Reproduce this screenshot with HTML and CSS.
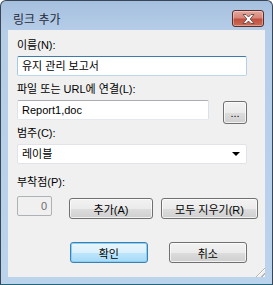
FILE: index.html
```html
<!DOCTYPE html>
<html lang="ko">
<head>
    <meta charset="UTF-8">
    <title>링크 추가</title>
    <link rel="stylesheet" href="styles.css">
</head>
<body>
    <div class="window">
        <div class="titlebar">
            <span class="title">링크 추가</span>
            <button class="close" title="닫기">
                <svg width="15" height="10" viewBox="0 0 15 10">
                    <path d="M2 0.5 L5 0.5 L7.5 3 L10 0.5 L13 0.5 L9.2 5 L13 9.5 L10 9.5 L7.5 7 L5 9.5 L2 9.5 L5.8 5 Z" fill="#fff" stroke="#5a3a3a" stroke-width="0.8" stroke-linejoin="round"/>
                </svg>
            </button>
        </div>

        <div class="client">
            <label class="label">이름(N):</label>
            <div class="field focused">유지 관리 보고서</div>

            <label class="label gap">파일 또는 URL에 연결(L):</label>
            <div class="row">
                <div class="field file">Report1,doc</div>
                <button class="btn browse">...</button>
            </div>

            <label class="label gap-sm">범주(C):</label>
            <div class="field combo">
                <span>레이블</span>
                <span class="arrow"></span>
            </div>

            <label class="label gap-lg">부착점(P):</label>
            <div class="row anchors">
                <div class="field number">0</div>
                <button class="btn add">추가(A)</button>
                <button class="btn clear">모두 지우기(R)</button>
            </div>

            <div class="row actions">
                <button class="btn ok">확인</button>
                <button class="btn cancel">취소</button>
            </div>

            <div class="grip"></div>
        </div>
    </div>
</body>
</html>
```

FILE: styles.css
```css
* {
    box-sizing: border-box;
}
body {
    margin: 0;
    background-color: #fff;
    font-family: "Liberation Sans", "Noto Sans CJK KR", sans-serif;
    font-size: 11px;
    color: #000;
}
.window {
    width: 273px;
    height: 285px;
    border: 1px solid #3a4656;
    border-bottom-color: #27627a;
    border-radius: 6px 6px 0 0;
    background: linear-gradient(to bottom, #a5c0de 0px, #b6cde8 30px, #bcd3ec 100%);
    display: flex;
    flex-direction: column;
}
.titlebar {
    height: 29px;
    display: flex;
    align-items: flex-start;
    justify-content: space-between;
    padding: 9px 8px 0 12px;
}
.title {
    font-family: "Noto Sans CJK KR", sans-serif;
    font-size: 12px;
    line-height: 17px;
    color: #1e2a38;
}
.close {
    width: 32px;
    height: 17px;
    margin-top: 0;
    padding: 0;
    border: 1px solid #5b2e2e;
    border-radius: 3px;
    background: linear-gradient(to bottom, #e3a99c 0%, #d7877a 45%, #c05040 55%, #cd6b55 100%);
    display: flex;
    align-items: center;
    justify-content: center;
    box-shadow: inset 0 0 0 1px rgba(255,255,255,0.35);
}
.client {
    position: relative;
    height: 247px;
    margin: 0 7px;
    background-color: #f0f0f0;
    padding: 8px 18px 0 9px;
    display: flex;
    flex-direction: column;
}
.label {
    display: block;
    line-height: 14px;
    height: 14px;
    margin-bottom: 4px;
}
.gap {
    margin-top: 6px;
}
.gap-sm {
    margin-top: 2px;
}
.gap-lg {
    margin-top: 11px;
    margin-bottom: 7px;
}
.field {
    height: 20px;
    background-color: #fff;
    border: 1px solid #abadb3;
    border-left-color: #e2e3ea;
    border-right-color: #dbdfe6;
    border-bottom-color: #e3e9ef;
    border-radius: 2px;
    padding: 0 4px;
    line-height: 18px;
    white-space: nowrap;
}
.focused {
    border-color: #3d7bad #b5cfe7 #b7d9ed #a4c9e3;
}
.row {
    display: flex;
    align-items: flex-start;
}
.file {
    width: 192px;
}
.combo {
    height: 20px;
    display: flex;
    justify-content: space-between;
    align-items: center;
    border-color: #e2e3ea;
    padding-right: 6px;
}
.arrow {
    width: 0;
    height: 0;
    border-left: 4px solid transparent;
    border-right: 4px solid transparent;
    border-top: 4px solid #000;
}
.btn {
    font-family: inherit;
    font-size: 11px;
    height: 21px;
    padding: 0;
    border: 1px solid #707070;
    border-radius: 3px;
    color: #000;
    background: linear-gradient(to bottom, #f2f2f2 0%, #ebebeb 50%, #dddddd 51%, #cfcfcf 100%);
    box-shadow: inset 0 0 0 1px rgba(255,255,255,0.7);
}
.browse {
    width: 24px;
    height: 23px;
    margin: 1px 0 0 14px;
    line-height: 10px;
}
.number {
    width: 35px;
    background-color: #f0f0f0;
    border-color: #adb2b5;
    color: #6d6d6d;
    text-align: right;
}
.add {
    width: 84px;
    margin: 2px 0 0 17px;
}
.clear {
    width: 97px;
    margin: 2px -11px 0 8px;
}
.actions {
    margin-top: 23px;
    padding-left: 53px;
}
.ok {
    width: 83px;
    border-color: #3c7fb1;
    background: linear-gradient(to bottom, #eaf6fd 0%, #d9f0fc 50%, #bee6fd 51%, #a7d9f5 100%);
    box-shadow: inset 0 0 0 1px #8ad0f5;
}
.cancel {
    width: 84px;
    margin-left: 21px;
}
.grip {
    position: absolute;
    right: 0;
    bottom: 0;
    width: 12px;
    height: 12px;
    background: repeating-linear-gradient(135deg, transparent 0 2px, #b3b3b3 2px 3px, #ffffff 3px 4px);
    clip-path: polygon(100% 0, 100% 100%, 0 100%);
}
```
